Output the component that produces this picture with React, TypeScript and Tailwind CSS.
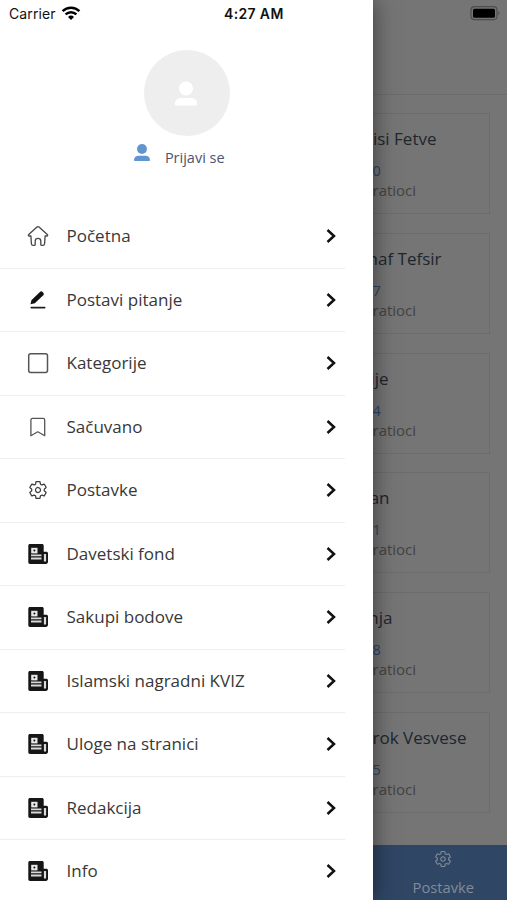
import { IoSettingsOutline } from "react-icons/io5";

type IconName = "home" | "edit" | "square" | "bookmark" | "gear" | "news";

function Icon({ name }: { name: IconName }) {
  if (name === "gear") return <IoSettingsOutline size={20} color="#3c3c3c" className="[stroke-width:1.5]" />;
  if (name === "home")
    return (
      <svg width="22" height="22" viewBox="0 0 22 22" fill="none" stroke="#4a4a4a" strokeWidth="1.35" strokeLinejoin="round" strokeLinecap="round">
        <path d="M3.900 11H2.200c-.9 0-1.100-.8-.5-1.400l8.300-7.500c.6-.5 1.400-.5 2 0l8.300 7.500c.6.600.4 1.400-.5 1.400h-1.700l-.5 7.700c-.1 1-.7 1.600-1.600 1.600h-1.300c-.5 0-.9-.4-.9-.9v-3.200a2.800 2.800 0 0 0-5.600 0v3.200c0 .5-.4.900-.9.900H6c-.9 0-1.500-.6-1.600-1.600z" />
      </svg>
    );
  if (name === "edit")
    return (
      <svg width="22" height="22" viewBox="0 0 22 22">
        <path d="M3.500 15.200l.9-4L12.900 3a1.900 1.900 0 0 1 2.700 0l.7.800c.7.800.7 1.800 0 2.500l-8.500 8z" fill="#111" />
        <path d="M4.200 18.600h13.600" stroke="#222" strokeWidth="1.600" strokeLinecap="round" />
      </svg>
    );
  if (name === "square")
    return (
      <svg width="22" height="22" viewBox="0 0 22 22" fill="none" stroke="#555" strokeWidth="1.500">
        <rect x="1.700" y="1.700" width="18.800" height="18.800" rx="2" />
      </svg>
    );
  if (name === "bookmark")
    return (
      <svg width="22" height="22" viewBox="0 0 22 22" fill="none" stroke="#555" strokeWidth="1.300" strokeLinejoin="round">
        <path d="M3.900 19.700V4c0-1 .6-1.600 1.500-1.600h10.800c.9 0 1.500.6 1.500 1.600v15.700l-6.900-3.900z" />
      </svg>
    );
  return (
    <svg width="22" height="22" viewBox="0 0 22 22">
      <path d="M3 1h12c1 0 1.700.7 1.700 1.700v6h2.600c1 0 1.700.7 1.700 1.700v8.400c0 1.300-.9 2.200-2.100 2.200H3c-1 0-1.700-.7-1.700-1.700V2.700C1.300 1.700 2 1 3 1z" fill="#161616" />
      <rect x="4.200" y="4.800" width="6.300" height="5.600" fill="#e8e8e8" />
      <circle cx="7.400" cy="7.600" r="1" fill="#161616" />
      <path d="M4 12.400h10.500M4 15.500h10.500" stroke="#d8d8d8" strokeWidth="1.900" />
      <rect x="16.900" y="10.900" width="2.200" height="7.700" rx=".5" fill="#dcdcdc" />
    </svg>
  );
}

function Person({ className }: { className: string }) {
  return (
    <svg className={className} viewBox="0 0 22 24" fill="currentColor">
      <circle cx="11" cy="7" r="7" />
      <path d="M0 24v-2.500C0 18.500 3 16.500 6 16.500h10c3 0 6 2 6 5V24z" />
    </svg>
  );
}

const items: { icon: IconName; label: string }[] = [
  { icon: "home", label: "Početna" },
  { icon: "edit", label: "Postavi pitanje" },
  { icon: "square", label: "Kategorije" },
  { icon: "bookmark", label: "Sačuvano" },
  { icon: "gear", label: "Postavke" },
  { icon: "news", label: "Davetski fond" },
  { icon: "news", label: "Sakupi bodove" },
  { icon: "news", label: "Islamski nagradni KVIZ" },
  { icon: "news", label: "Uloge na stranici" },
  { icon: "news", label: "Redakcija" },
  { icon: "news", label: "Info" },
];

const cards = [
  { title: "isi Fetve", count: "0", width: "w-[64px]" },
  { title: "naf Tefsir", count: "7", width: "w-[69px]" },
  { title: "ije", count: "4", width: "w-[16px]" },
  { title: "an", count: "1", width: "w-[17px]" },
  { title: "nja", count: "8", width: "w-[20px]" },
  { title: "rok Vesvese", count: "5", width: "w-[94px]" },
];

export default function App() {
  return (
    <div className="flex h-[900px] w-[507px] overflow-hidden bg-[#757575] font-['Open_Sans','Noto_Sans',sans-serif]">
      <aside className="relative z-10 flex w-[372.5px] shrink-0 flex-col bg-white shadow-[0_0_22px_rgba(0,0,0,0.5)]">
        <header className="flex h-[26px] shrink-0 items-center pl-[9px] font-['Inter',sans-serif] text-[#111]">
          <span className="w-[48px] text-[14px] tracking-[0.1px]">Carrier</span>
          <svg className="ml-[4px]" width="20" height="15" viewBox="0 0 20 15" fill="none" stroke="#000" strokeWidth="2.500">
            <path d="M1.600 5.200a12 12 0 0 1 16.800 0M4.600 8.400a7.700 7.700 0 0 1 10.800 0" />
            <path d="M7 10.900a4.300 4.300 0 0 1 6 0l-3 3z" fill="#000" stroke="none" />
          </svg>
          <span className="ml-[143px] whitespace-nowrap text-[14px] font-semibold tracking-[0.35px]">4:27 AM</span>
        </header>

        <section className="flex h-[179px] shrink-0 flex-col items-center pt-[24px]">
          <div className="ml-px flex size-[86px] shrink-0 items-center justify-center rounded-full bg-[#eeeeee]">
            <Person className="mr-px mt-px h-[25px] w-[22px] text-white" />
          </div>
          <div className="mt-[7px] flex items-start pr-[14px]">
            <Person className="mt-[1px] h-[17px] w-[16px] text-[#6095cf]" />
            <span className="ml-[15px] mt-[5px] text-[14.500px] leading-[20px] text-[#4c5370]">Prijavi se</span>
          </div>
        </section>

        <nav className="flex flex-col">
          {items.map((item) => (
            <div key={item.label} className="flex h-[63.500px] w-[345px] shrink-0 items-center border-b border-[#eeeeee] pl-[27px]">
              <span className="flex size-[22px] shrink-0 items-center justify-center"><Icon name={item.icon} /></span>
              <span className="ml-[17.500px] flex-1 whitespace-nowrap text-[17px] leading-6 text-[#383838]">{item.label}</span>
              <svg className="mr-[8.500px] shrink-0" width="12" height="16" viewBox="0 0 12 16" fill="none" stroke="#111" strokeWidth="2.500">
                <path d="M2.500 2L9 8l-6.500 6" />
              </svg>
            </div>
          ))}
        </nav>
      </aside>

      <main className="flex min-w-0 flex-1 flex-col">
        <header className="flex h-[95px] shrink-0 items-start justify-end border-b border-[#6b6b6b] pr-[6px] pt-[6px]">
          <svg width="31" height="15" viewBox="0 0 31 15">
            <rect x="1" y=".7" width="26" height="13" rx="3.500" fill="none" stroke="#4d4d4d" strokeWidth="1.200" />
            <rect x="3" y="2.700" width="22" height="9" rx="1.500" fill="#000" />
            <path d="M28.500 5.200q2.400 2 0 4z" fill="#4d4d4d" />
          </svg>
        </header>
        <div className="flex flex-1 flex-col gap-[18.800px] pt-[18px]">
          {cards.map((card) => (
            <article key={card.title} className="h-[101px] w-[117px] shrink-0 border-y border-r border-[#6c6c6c] pt-[13px]">
              <div className={`${card.width} flex justify-end whitespace-nowrap text-[17px] leading-6 text-[#20262d]`}>
                <span>{card.title}</span>
              </div>
              <div className="mt-[10px] text-[14.500px] leading-[20px] text-[#2f4668]">{card.count}</div>
              <div className="text-[15px] leading-[19px] text-[#434343]">ratioci</div>
            </article>
          ))}
        </div>
        <footer className="flex h-[55px] shrink-0 flex-col items-center bg-[#2f4664] pl-[7px] pt-[5px] text-[#818b99]">
          <IoSettingsOutline size={18} />
          <span className="mt-[9px] text-[14.700px] leading-[20px]">Postavke</span>
        </footer>
      </main>
    </div>
  );
}
